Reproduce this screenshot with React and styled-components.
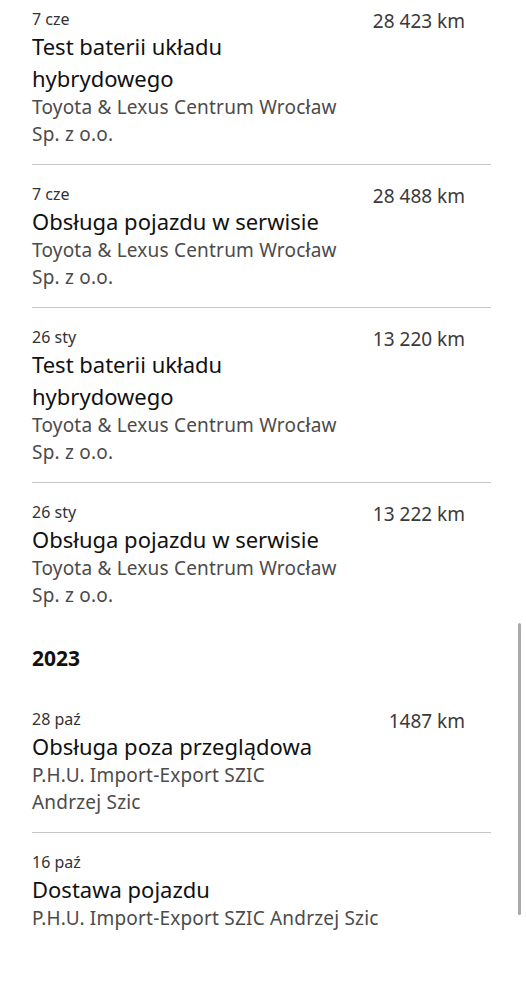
import React from "react";
import styled, { createGlobalStyle } from "styled-components";

const Global = createGlobalStyle`
  html, body { margin: 0; padding: 0; background: #fff; }
  body { font-family: "Noto Sans", "Open Sans", sans-serif; -webkit-font-smoothing: antialiased; }
`;

const Screen = styled.div`
  position: relative;
  width: 526px;
  height: 999px;
  overflow: hidden;
  background: #fff;
`;

const List = styled.div`
  margin-top: -10px;
  padding: 0 35px 0 32px;
  display: flex;
  flex-direction: column;
`;

const Entry = styled.div`
  display: grid;
  grid-template-columns: 1fr auto;
  column-gap: 20px;
  padding: 18px 0 16px;
  border-bottom: ${(p) => (p.$divider ? "1.5px solid #c4c4c4" : "none")};
`;

const Info = styled.div`
  display: flex;
  flex-direction: column;
  min-width: 0;
`;

const DateText = styled.div`
  font-size: 16px;
  line-height: 22px;
  color: #333;
`;

const Title = styled.div`
  font-size: 22px;
  line-height: 32px;
  color: #111;
`;

const Place = styled.div`
  font-size: 19px;
  line-height: 27px;
  letter-spacing: 0.2px;
  color: #4b4b4b;
`;

const Km = styled.div`
  font-size: 19px;
  line-height: 27px;
  color: #3a3a3a;
  padding-right: 26px;
  text-align: right;
  white-space: nowrap;
`;

const Year = styled.h2`
  margin: 0;
  padding: 17px 0 16px;
  font-size: 21px;
  line-height: 32px;
  font-weight: 700;
  color: #111;
`;

const Scrollbar = styled.div`
  position: absolute;
  right: 5px;
  top: 623px;
  width: 3px;
  height: 292px;
  border-radius: 2px;
  background: #a9a9a9;
`;

const items2024 = [
  { date: "7 cze", km: "28 423 km", title: "Test baterii układu hybrydowego", place: "Toyota & Lexus Centrum Wrocław Sp. z o.o.", divider: true },
  { date: "7 cze", km: "28 488 km", title: "Obsługa pojazdu w serwisie", place: "Toyota & Lexus Centrum Wrocław Sp. z o.o.", divider: true },
  { date: "26 sty", km: "13 220 km", title: "Test baterii układu hybrydowego", place: "Toyota & Lexus Centrum Wrocław Sp. z o.o.", divider: true },
  { date: "26 sty", km: "13 222 km", title: "Obsługa pojazdu w serwisie", place: "Toyota & Lexus Centrum Wrocław Sp. z o.o.", divider: false },
];

const items2023 = [
  { date: "28 paź", km: "1487 km", title: "Obsługa poza przeglądowa", place: "P.H.U. Import-Export SZIC Andrzej\u00a0Szic", divider: true },
  { date: "16 paź", km: "", title: "Dostawa pojazdu", place: "P.H.U. Import-Export SZIC Andrzej Szic", divider: false },
];

function Item({ it }) {
  return (
    <Entry $divider={it.divider}>
      <Info>
        <DateText>{it.date}</DateText>
        <Title>{it.title}</Title>
        <Place>{it.place}</Place>
      </Info>
      <Km>{it.km}</Km>
    </Entry>
  );
}

export default function App() {
  return (
    <Screen>
      <Global />
      <List>
        {items2024.map((it, i) => (
          <Item key={i} it={it} />
        ))}
        <Year>2023</Year>
        {items2023.map((it, i) => (
          <Item key={i} it={it} />
        ))}
      </List>
      <Scrollbar />
    </Screen>
  );
}
